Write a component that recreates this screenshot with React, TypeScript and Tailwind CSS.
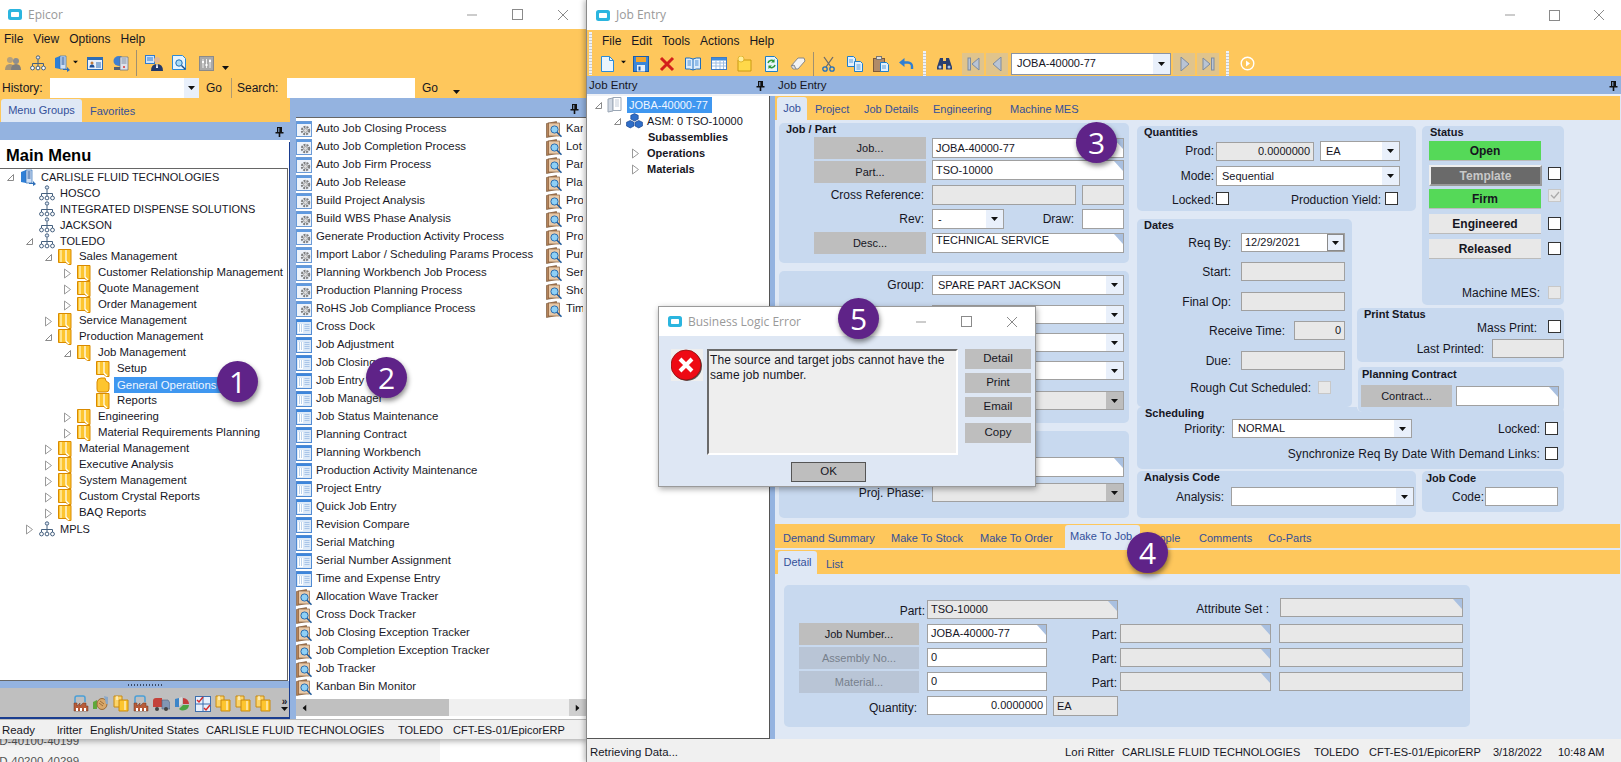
import React from "react";

const Caret = ({ className = "" }: { className?: string }) => (
  <svg width="7" height="4" viewBox="0 0 7 4" className={className}><path d="M0 0h7L3.5 4z" fill="#111" /></svg>
);
const Exp = ({ open }: { open?: boolean }) =>
  open ? (
    <svg width="9" height="9" viewBox="0 0 9 9"><path d="M7.5 1.5v6h-6z" fill="#fff" stroke="#8a8a8a" /></svg>
  ) : (
    <svg width="9" height="11" viewBox="0 0 9 11"><path d="M1.5 1l6 4.5-6 4.5z" fill="#fff" stroke="#9a9a9a" /></svg>
  );
const Folder = ({ rounded }: { rounded?: boolean }) => (
  <svg width="14" height="16" viewBox="0 0 14 16">
    {rounded ? (
      <path d="M1 5q0-4 4-4h4l1 3 3 2v6q0 3-3 3H3q-2 0-2-3z" fill="#fdc52f" stroke="#d98a00" />
    ) : (
      <path d="M.5.5h12.5v15h-3l-2-2H.5z" fill="#fdc52f" stroke="#d98a00" />
    )}
    {!rounded && <path d="M8 1v11l3 3" stroke="#fff" strokeWidth="1.2" fill="none" />}
    {!rounded && <path d="M3 1v12" stroke="#ffe38a" strokeWidth="2" />}
  </svg>
);
const Org = () => (
  <svg width="16" height="16" viewBox="0 0 16 16" fill="none" stroke="#45607f">
    <circle cx="8" cy="2.5" r="1.7" fill="#dfe8f5" />
    <path d="M8 4.5v4M2.5 11V8.5h11V11M8 8.5V11" />
    <circle cx="2.5" cy="13" r="1.9" fill="#fff" />
    <circle cx="8" cy="13" r="1.9" fill="#fff" />
    <circle cx="13.5" cy="13" r="1.9" fill="#fff" />
  </svg>
);
const Building = () => (
  <svg width="16" height="17" viewBox="0 0 16 17">
    <path d="M1 3l5-2v13l-5-1z" fill="#2e7fd6" />
    <path d="M6 1h6v13H6z" fill="#cfe0f5" stroke="#2e6fb8" strokeWidth=".7" />
    <path d="M7.5 3h3M7.5 5h3M7.5 7h3M7.5 9h3" stroke="#1c4f96" />
    <path d="M9 14h4v-2l3 3-3 2v-2H9z" fill="#2e6fb8" />
  </svg>
);
const Process = () => (
  <svg width="16" height="16" viewBox="0 0 16 16">
    <rect x=".5" y=".5" width="15" height="15" fill="#eef3fa" stroke="#6a9ad6" />
    <rect x="1" y="1" width="14" height="2" fill="#5f9ae0" />
    <circle cx="9.5" cy="9.5" r="3.7" fill="none" stroke="#7d7d7d" strokeWidth="2" strokeDasharray="2 1" />
    <circle cx="9.5" cy="9.5" r="2" fill="#dcdcdc" stroke="#777" strokeWidth=".6" />
  </svg>
);
const Entry = () => (
  <svg width="16" height="16" viewBox="0 0 16 16">
    <rect x=".5" y=".5" width="15" height="15" fill="#dce9f8" stroke="#4f8ad2" />
    <rect x="1" y="1" width="14" height="2" fill="#3d86dc" />
    <rect x="2" y="5" width="5" height="9" fill="#fff" />
    <path d="M3 6h1M5 6h1M3 8h1M5 8h1M3 10h1M5 10h1M3 12h1M5 12h1" stroke="#7aa6d8" />
    <path d="M8.5 5.5h5M8.5 7.5h5M8.5 9.5h5M8.5 11.5h5" stroke="#a9c5e8" />
  </svg>
);
const Tracker = () => (
  <svg width="17" height="17" viewBox="0 0 17 17">
    <path d="M.5 2.5l10-2v14l-10 2z" fill="#b5835a" stroke="#6c4a2c" strokeWidth=".6" />
    <rect x="2.5" y="2" width="11" height="13" fill="#e8c9a8" stroke="#8a5f3a" strokeWidth=".7" />
    <circle cx="8.5" cy="8.5" r="3.6" fill="#8fd0f5" stroke="#2b6fb0" />
    <path d="M11 11.2l4.5 4.5" stroke="#1e5a9a" strokeWidth="1.6" />
  </svg>
);
const Pin = () => (
  <svg width="9" height="11" viewBox="0 0 9 11"><path d="M2 1h5v5h1.500v1.500H5.300V11H3.700V7.500H.5V6H2zM3.300 2v4h1V2z" fill="#111" /></svg>
);
const Logo = () => (
  <svg width="14" height="11" viewBox="0 0 14 11"><rect x="0" y="0" width="14" height="11" rx="2.500" fill="#2bb5df" /><rect x="3" y="3" width="8" height="5" rx=".8" fill="#fff" /></svg>
);
const Ctl = ({ gap }: { gap: string }) => (
  <div className={"flex items-center text-[#7a7a7a] " + gap}>
    <svg width="12" height="12" viewBox="0 0 12 12"><path d="M1 6h10" stroke="#999" /></svg>
    <svg width="11" height="11" viewBox="0 0 11 11"><rect x=".5" y=".5" width="10" height="10" fill="none" stroke="#8a8a8a" /></svg>
    <svg width="12" height="12" viewBox="0 0 12 12"><path d="M1 1l10 10M11 1L1 11" stroke="#8a8a8a" /></svg>
  </div>
);
const Badge = ({ n, cls }: { n: number; cls: string }) => (
  <div className={"absolute z-30 w-[41px] h-[41px] rounded-full bg-[#5f2388] text-white flex items-center justify-center text-[30px] leading-none font-['Open_Sans',sans-serif] shadow-[1px_3px_5px_rgba(0,0,0,0.45)] " + cls}>{n}</div>
);

const Fold = () => (
  <svg width="9" height="10" viewBox="0 0 9 10" className="absolute right-0 top-0"><path d="M0 0h9v10z" fill="#a9c0e0" /></svg>
);

const Field = ({ cls, text, gray, fold, right, top }: { cls: string; text?: string; gray?: boolean; fold?: boolean; right?: boolean; top?: boolean }) => (
  <div className={"relative shrink-0 border border-[#a0a0a0] flex px-[3px] text-[11px] overflow-hidden " + (top ? "items-start leading-[13px] " : "items-center ") + (right ? "justify-end " : "") + (gray ? "bg-[#e8e8e8] " : "bg-white ") + cls}>
    <span className="whitespace-nowrap">{text}</span>
    {fold && <Fold />}
  </div>
);
const Combo = ({ cls, text, gray }: { cls: string; text?: string; gray?: boolean }) => (
  <div className={"shrink-0 border border-[#a0a0a0] flex items-center text-[11px] " + (gray ? "bg-[#e8e8e8] " : "bg-white ") + cls}>
    <span className="flex-1 px-[5px] whitespace-nowrap overflow-hidden">{text}</span>
    <div className={"w-[17px] h-full flex items-center justify-center " + (gray ? "bg-[#bdbdbd]" : "bg-[#e9f0fb]")}><Caret /></div>
  </div>
);
const Check = ({ cls = "", gray, checked }: { cls?: string; gray?: boolean; checked?: boolean }) => (
  <div className={"shrink-0 w-[13px] h-[13px] flex items-center justify-center border " + (gray ? "border-[#c8c8c8] bg-[#e8e8e8] " : "border-[#333] bg-white ") + cls}>
    {checked && <svg width="10" height="9" viewBox="0 0 10 9"><path d="M1 4l3 3 5-6" stroke="#aaa" strokeWidth="1.300" fill="none" /></svg>}
  </div>
);
const Label = ({ cls, children }: { cls: string; children: React.ReactNode }) => (
  <span className={"shrink-0 text-right text-[12px] whitespace-nowrap " + cls}>{children}</span>
);
const Btn = ({ cls, children, disabled }: { cls: string; children: React.ReactNode; disabled?: boolean }) => (
  <div className={"shrink-0 flex items-center justify-center text-[11px] " + (disabled ? "bg-[#b9c5d6] text-[#77808c] " : "bg-[#bebebe] ") + cls}>{children}</div>
);
const Title = ({ cls, children }: { cls: string; children: React.ReactNode }) => (
  <div className={"text-[11px] font-bold flex items-center whitespace-nowrap " + cls}>{children}</div>
);
const Panel = ({ cls, children }: { cls: string; children?: React.ReactNode }) => (
  <div className={"rounded-[5px] bg-[#c8d9ef] flex flex-col " + cls}>{children}</div>
);

type Node = { d: number; e?: "o" | "c"; i: "b" | "o" | "f" | "r"; t: string; sel?: boolean };
const tree: Node[] = [
  { d: 0, e: "o", i: "b", t: "CARLISLE FLUID TECHNOLOGIES" },
  { d: 1, i: "o", t: "HOSCO" },
  { d: 1, i: "o", t: "INTEGRATED DISPENSE SOLUTIONS" },
  { d: 1, i: "o", t: "JACKSON" },
  { d: 1, e: "o", i: "o", t: "TOLEDO" },
  { d: 2, e: "o", i: "f", t: "Sales Management" },
  { d: 3, e: "c", i: "f", t: "Customer Relationship Management" },
  { d: 3, e: "c", i: "f", t: "Quote Management" },
  { d: 3, e: "c", i: "f", t: "Order Management" },
  { d: 2, e: "c", i: "f", t: "Service Management" },
  { d: 2, e: "o", i: "f", t: "Production Management" },
  { d: 3, e: "o", i: "f", t: "Job Management" },
  { d: 4, i: "f", t: "Setup" },
  { d: 4, i: "r", t: "General Operations", sel: true },
  { d: 4, i: "f", t: "Reports" },
  { d: 3, e: "c", i: "f", t: "Engineering" },
  { d: 3, e: "c", i: "f", t: "Material Requirements Planning" },
  { d: 2, e: "c", i: "f", t: "Material Management" },
  { d: 2, e: "c", i: "f", t: "Executive Analysis" },
  { d: 2, e: "c", i: "f", t: "System Management" },
  { d: 2, e: "c", i: "f", t: "Custom Crystal Reports" },
  { d: 2, e: "c", i: "f", t: "BAQ Reports" },
  { d: 1, e: "c", i: "o", t: "MPLS" },
];
const depthPad = ["pl-[6px]", "pl-[25px]", "pl-[44px]", "pl-[63px]", "pl-[82px]"];

const processes = ["Auto Job Closing Process", "Auto Job Completion Process", "Auto Job Firm Process", "Auto Job Release", "Build Project Analysis", "Build WBS Phase Analysis", "Generate Production Activity Process", "Import Labor / Scheduling Params Process", "Planning Workbench Job Process", "Production Planning Process", "RoHS Job Compliance Process"];
const entries = ["Cross Dock", "Job Adjustment", "Job Closing", "Job Entry", "Job Manager", "Job Status Maintenance", "Planning Contract", "Planning Workbench", "Production Activity Maintenance", "Project Entry", "Quick Job Entry", "Revision Compare", "Serial Matching", "Serial Number Assignment", "Time and Expense Entry"];
const trackers = ["Allocation Wave Tracker", "Cross Dock Tracker", "Job Closing Exception Tracker", "Job Completion Exception Tracker", "Job Tracker", "Kanban Bin Monitor"];
const col2 = ["Kanban", "Lot", "Part", "Plant", "Project", "Production", "Production", "Purchase", "Serial", "Shop", "Time"];

const Item = ({ icon, text }: { icon: React.ReactNode; text: string }) => (
  <div className="flex items-center h-[18px] whitespace-nowrap">
    <div className="w-[20px] shrink-0">{icon}</div>
    <span className="text-[11.4px]">{text}</span>
  </div>
);

const Users = () => (
  <svg width="16" height="16" viewBox="0 0 16 16"><circle cx="5" cy="5" r="3" fill="#b5a17e" /><circle cx="11" cy="6" r="3" fill="#8e8e8e" /><path d="M0 15q0-6 5-6t4 6z" fill="#a69578" /><path d="M6 15q0-6 5-6t5 6z" fill="#7f7f7f" /></svg>
);
const Card = () => (
  <svg width="16" height="13" viewBox="0 0 16 13"><rect x=".5" y=".5" width="15" height="12" fill="#e8f0fb" stroke="#2d6db5" /><rect x="1" y="1" width="14" height="2" fill="#2d6db5" /><circle cx="5" cy="6" r="1.500" fill="#c07a3a" /><path d="M2.500 10.500q0-3 2.500-3t2.500 3z" fill="#1e4f96" /><path d="M9 6h5M9 8h5M9 10h5" stroke="#2d6db5" /></svg>
);
const Server = () => (
  <svg width="16" height="17" viewBox="0 0 16 17"><ellipse cx="6" cy="6" rx="5.500" ry="5" fill="#3f7fd0" /><path d="M7 2h8v13H7z" fill="#dde2ea" stroke="#5b6c80" strokeWidth=".7" /><path d="M8.500 4h5M8.500 6h5M8.500 8h5" stroke="#7e8ea3" /><circle cx="11" cy="12" r="1" fill="#d33" /><path d="M1 12h6v3H1z" fill="#555f6e" /></svg>
);
const Person = () => (
  <svg width="18" height="16" viewBox="0 0 18 16"><rect x=".5" y=".5" width="9" height="8" fill="#cfe4fa" stroke="#2f7bd0" /><path d="M2 3h6M2 5h6" stroke="#2f7bd0" /><circle cx="12" cy="5" r="3" fill="#e6b98f" /><path d="M6 16q0-7 6-7t6 7z" fill="#22396b" /><path d="M11.500 9h1l.5 4h-2z" fill="#fff" /></svg>
);
const DocMag = () => (
  <svg width="15" height="17" viewBox="0 0 15 17"><path d="M.5.5h10l3 3v11H.5z" fill="#e8f4fd" stroke="#2b8bd8" /><circle cx="7" cy="8" r="3.200" fill="#a9dcf8" stroke="#1f6fb8" /><path d="M9.500 10.500l4 4" stroke="#1f4f88" strokeWidth="1.500" /></svg>
);
const Sliders = () => (
  <svg width="15" height="15" viewBox="0 0 15 15"><rect x=".5" y=".5" width="14" height="14" fill="#a9a9a9" stroke="#8a8a8a" /><path d="M4 3v9M7.500 3v9M11 3v9" stroke="#eee" /><rect x="3" y="5" width="2" height="2" fill="#fff" /><rect x="6.500" y="8" width="2" height="2" fill="#fff" /><rect x="10" y="4" width="2" height="2" fill="#fff" /></svg>
);
const Factory = () => (
  <svg width="16" height="17" viewBox="0 0 16 17"><path d="M2 8V3q0-2 2-2h6q2 0 2 2v4" fill="none" stroke="#4aa0d8" strokeWidth="1.500" /><path d="M1 16V8h3v3l3-3v3l3-3 1 0 2 0v3h2v5z" fill="#b75c3a" stroke="#70371f" strokeWidth=".5" /><path d="M3 13h2v3H3zM7 13h2v3H7zM11 13h2v3h-2z" fill="#fff" /></svg>
);
const Shake = () => (
  <svg width="16" height="17" viewBox="0 0 16 17"><path d="M0 7l4-2v9H0z" fill="#5fa83c" /><ellipse cx="9" cy="9" rx="5" ry="5.500" fill="#d9a86a" stroke="#9b6d37" /><path d="M11 1l4 1v7h-2z" fill="#8aa8c8" /><path d="M6 8l4 3M7 6l4 3" stroke="#9b6d37" /></svg>
);
const Pages = () => (
  <svg width="16" height="17" viewBox="0 0 16 17"><path d="M1 1h8v11H1z" fill="#fbd46a" stroke="#c98a10" /><path d="M6 5h9v11H6z" fill="#fdc52f" stroke="#c98a10" /><path d="M4 1v4M12 6v9" stroke="#fff" /></svg>
);
const Truck = () => (
  <svg width="17" height="16" viewBox="0 0 17 16"><path d="M0 5q0-3 3-3h6v9H0z" fill="#c4423a" /><path d="M9 4h6l2 3v6H9z" fill="#8296b5" stroke="#50607a" strokeWidth=".6" /><circle cx="4" cy="13" r="2" fill="#444" /><circle cx="13" cy="13" r="2" fill="#444" /></svg>
);
const Pie = () => (
  <svg width="17" height="17" viewBox="0 0 17 17"><path d="M9 3a6 6 0 016 6H9z" fill="#c33b3b" /><path d="M9 10h6a6 6 0 01-10 4z" fill="#4aa343" /><path d="M1 4l4-1v9H1z" fill="#3d86c8" /><path d="M8 9V2L5 3v8z" fill="#d9d9d9" /></svg>
);
const Checks = () => (
  <svg width="16" height="16" viewBox="0 0 16 16"><rect x=".5" y=".5" width="15" height="15" fill="#e8f0fb" stroke="#3d6fae" /><path d="M8 0v16M0 8h16" stroke="#3d6fae" /><path d="M2 4l2 2 4-5M9 12l2 2 4-5" stroke="#d42c2c" strokeWidth="1.500" fill="none" /></svg>
);

const Grip = ({ cls }: { cls: string }) => (
  <div className={"w-[3px] h-[25px] shrink-0 bg-[repeating-linear-gradient(to_bottom,#eef2f8_0,#eef2f8_2px,#c9c9c9_2px,#c9c9c9_3px)] " + cls} />
);

const SaveIco = () => (
  <svg width="16" height="16" viewBox="0 0 16 16"><rect x=".5" y=".5" width="15" height="15" fill="#3b86d8" stroke="#1d5ca8" /><rect x="3" y="1" width="10" height="5" fill="#f4a52a" /><rect x="4" y="9" width="8" height="6.500" fill="#e6eef8" /><rect x="5.500" y="10.500" width="2" height="4" fill="#1d5ca8" /></svg>
);
const Book = () => (
  <svg width="16" height="14" viewBox="0 0 16 14"><path d="M8 2Q5 .5 .5 1v11q4.500-.5 7.500 1 3-1.500 7.500-1V1Q11 .5 8 2z" fill="#dcecfb" stroke="#1f6fc0" /><path d="M8 2v11" stroke="#1f6fc0" /><path d="M2.500 4h3.500M2.500 6h3.500M2.500 8h3.500M10 4h3.500M10 6h3.500M10 8h3.500" stroke="#4a90d8" /></svg>
);
const Table = () => (
  <svg width="16" height="13" viewBox="0 0 16 13"><rect x=".5" y=".5" width="15" height="12" fill="#fff" stroke="#3f7cc4" /><rect x="1" y="1" width="14" height="2.500" fill="#3f8bdc" /><path d="M1 6h14M1 9h14M5 3.500V12M9 3.500V12M12.500 3.500V12" stroke="#9dbde2" /></svg>
);
const Note = () => (
  <svg width="15" height="16" viewBox="0 0 15 16"><path d="M1 4h13v11H1z" fill="#ffd94a" stroke="#c99a12" /><circle cx="4" cy="3" r="3" fill="#ffef9a" stroke="#d7a516" strokeWidth=".7" /></svg>
);
const Refresh = () => (
  <svg width="13" height="16" viewBox="0 0 13 16"><path d="M.5.5h9l3 3v12H.5z" fill="#e8f5fb" stroke="#1f7fc4" /><path d="M3 7a3.500 3.500 0 016-1.500M10 9a3.500 3.500 0 01-6 1.500" stroke="#2a9a3a" strokeWidth="1.500" fill="none" /><path d="M9.500 3v3.500H6zM3.500 13V9.500H7z" fill="#2a9a3a" /></svg>
);
const Eraser = () => (
  <svg width="16" height="14" viewBox="0 0 16 14"><path d="M1 9l7-8h6l1 3-7 8H3z" fill="#f3f3f3" stroke="#888" /><path d="M1 9l3-1 2 4" fill="#d5d5d5" stroke="#888" /></svg>
);
const Scissors = () => (
  <svg width="13" height="16" viewBox="0 0 13 16" fill="none"><path d="M2 1l7 10M11 1L4 11" stroke="#6b6b6b" strokeWidth="1.300" /><circle cx="3" cy="13" r="2.200" stroke="#1f6fc0" strokeWidth="1.300" /><circle cx="10" cy="13" r="2.200" stroke="#1f6fc0" strokeWidth="1.300" /></svg>
);
const Copy = () => (
  <svg width="16" height="16" viewBox="0 0 16 16"><path d="M.5.5h6l2 2v8H.5z" fill="#e3f0fc" stroke="#1f7fcb" /><path d="M7.500 5.500h6l2 2v8h-8z" fill="#e3f0fc" stroke="#1f7fcb" /><path d="M9.500 9h4M9.500 11h4M9.500 13h4M2 4h4M2 6h4" stroke="#5aa0dc" /></svg>
);
const Paste = () => (
  <svg width="16" height="16" viewBox="0 0 16 16"><rect x=".5" y="2.500" width="11" height="13" fill="#b08a68" stroke="#7a5a3c" /><rect x="3.500" y=".5" width="5" height="3" fill="#ddd" stroke="#777" /><path d="M7.500 6.500h6l2 2v7h-8z" fill="#e3f0fc" stroke="#1f7fcb" /><path d="M9 10h4M9 12h4" stroke="#5aa0dc" /></svg>
);
const Undo = () => (
  <svg width="15" height="12" viewBox="0 0 15 12" fill="none"><path d="M4.500 4.500H9a4 4 0 014 4V11" stroke="#2f7fd2" strokeWidth="2.400" /><path d="M5.500 0v9L0 4.500z" fill="#2f7fd2" /></svg>
);
const Binoc = () => (
  <svg width="15" height="13" viewBox="0 0 15 13"><path d="M3 1h3v3h3V1h3l3 9v2.500H9V7H6v5.500H0V10z" fill="#2b3f6e" /><circle cx="3" cy="10" r="1.500" fill="#a9c4ea" /><circle cx="12" cy="10" r="1.500" fill="#a9c4ea" /></svg>
);
const Nav = ({ flip, bar }: { flip?: boolean; bar?: boolean }) => (
  <div className="w-[22px] h-[22px] shrink-0 bg-[#e0c48c] flex items-center justify-center">
    <svg width="13" height="14" viewBox="0 0 13 14" className={flip ? "" : "-scale-x-100"}>
      <path d={bar ? "M1 1l7 6-7 6z" : "M3 0l8 7-8 7z"} fill="#b9c4d4" stroke="#7d8ba0" />
      {bar && <rect x="9.500" y="1" width="2.500" height="12" fill="#b9c4d4" stroke="#7d8ba0" />}
    </svg>
  </div>
);

function LeftWindow() {
  return (
    <div className="absolute left-0 top-0 w-[587px] h-[739px] flex flex-col bg-[#f0f0f0] shadow-[0_2px_6px_rgba(0,0,0,0.35)] overflow-hidden">
      <div className="h-[29px] shrink-0 bg-white flex items-center pl-[8px] font-['Open_Sans',sans-serif] text-[12px] text-[#999]">
        <Logo /><span className="ml-[6px]">Epicor</span>
        <div className="ml-auto pr-[18px]"><Ctl gap="gap-[34px]" /></div>
      </div>
      <div className="h-[69px] shrink-0 bg-[#fec75c] flex flex-col text-[12px]">
        <div className="h-[20px] flex items-center pl-[4px] gap-[10px]"><span>File</span><span>View</span><span>Options</span><span>Help</span></div>
        <div className="h-[28px] flex items-center pl-[5px]">
          <Users />
          <div className="ml-[9px]"><Org /></div>
          <div className="ml-[8px]"><Building /></div>
          <Caret className="ml-[2px] mb-[3px] scale-75" />
          <div className="ml-[8px]"><Card /></div>
          <div className="ml-[10px]"><Server /></div>
          <div className="ml-[7px] w-px h-[26px] bg-[#a09070]" />
          <div className="ml-[8px]"><Person /></div>
          <div className="ml-[9px]"><DocMag /></div>
          <div className="ml-[12px]"><Sliders /></div>
          <Caret className="ml-[8px] mt-[10px]" />
        </div>
        <div className="h-[21px] flex items-center pl-[2px]">
          <span className="w-[48px]">History:</span>
          <div className="w-[149px] h-[20px] bg-white flex justify-end"><div className="w-[15px] h-full bg-[#e9f0fb] flex items-center justify-center"><Caret /></div></div>
          <span className="ml-[7px]">Go</span>
          <div className="ml-[9px] w-px h-[20px] bg-[#b09a70]" />
          <span className="ml-[5px] w-[50px]">Search:</span>
          <div className="w-[128px] h-[20px] bg-white" />
          <span className="ml-[7px]">Go</span>
          <Caret className="ml-[15px] mt-[8px]" />
        </div>
      </div>
      <div className="flex-1 flex min-h-0">
        <div className="w-[290px] shrink-0 flex flex-col bg-white">
          <div className="h-[24px] shrink-0 bg-[#fec75c] flex text-[11px] text-[#34509a]">
            <div className="ml-[1px] mt-[1px] w-[81px] bg-[#dfe8f5] rounded-t-[3px] flex items-center justify-center">Menu Groups</div>
            <span className="ml-[8px] mt-[5px]">Favorites</span>
          </div>
          <div className="h-[18px] shrink-0 bg-[#94b3e0] flex items-center justify-end pr-[6px]"><Pin /></div>
          <div className="mt-[2px] flex-1 min-h-0 flex flex-col border-r border-b-2 border-[#1a3d8f]">
            <div className="h-[26px] shrink-0 pl-[6px] flex items-center text-[16.500px] font-bold text-black">Main Menu</div>
            <div className="h-[513px] shrink-0 mr-[1px] border-y border-r border-[#666] overflow-hidden">
              {tree.map((n) => {
                const upper = n.t === n.t.toUpperCase();
                return (
                  <div key={n.t} className={"flex items-center h-[16px] whitespace-nowrap " + depthPad[n.d] + (upper ? " text-[11px]" : " text-[11.4px]")}>
                    <div className="w-[14px] shrink-0 flex">{n.e === "o" ? <Exp open /> : n.e === "c" ? <Exp /> : null}</div>
                    <div className="w-[19px] shrink-0 flex">{n.i === "b" ? <Building /> : n.i === "o" ? <Org /> : n.i === "r" ? <Folder rounded /> : <Folder />}</div>
                    <span className={n.sel ? "bg-[#3f97f0] text-[#f0f6ff] h-[16px] ml-[-1px] pl-[3px] pr-[10px] leading-[16px]" : "ml-[2px]"}>{n.t}</span>
                  </div>
                );
              })}
            </div>
            <div className="h-[7px] shrink-0 bg-[#94b3e0] flex justify-center items-center"><div className="w-[34px] h-[2px] bg-[repeating-linear-gradient(to_right,#3a4a66_0,#3a4a66_1px,transparent_1px,transparent_3px)]" /></div>
            <div className="flex-1 bg-[#bfbfbf] flex items-center pl-[73px] pt-[2px] gap-[4px]">
              <Factory /><Shake /><Pages /><Factory /><Truck /><Pie /><Checks /><Pages /><Pages /><Pages />
              <div className="ml-[6px] flex flex-col items-center leading-none text-[11px]"><span className="font-bold text-[10px]">»</span><Caret /></div>
            </div>
          </div>
        </div>
        <div className="flex-1 flex flex-col min-w-0 bg-[#94b3e0]">
          <div className="h-[19px] shrink-0 flex items-center justify-end pr-[8px] pt-[2px]"><Pin /></div>
          <div className="flex-1 min-h-0 ml-[6px] mr-[1px] flex flex-col border-t border-[#666] bg-white">
            <div className="flex-1 min-h-0 flex overflow-hidden pt-[2px] text-[#1a1a28]">
              <div className="w-[250px] shrink-0 flex flex-col">
                {processes.map((t) => <Item key={t} icon={<Process />} text={t} />)}
                {entries.map((t) => <Item key={t} icon={<Entry />} text={t} />)}
                {trackers.map((t) => <Item key={t} icon={<Tracker />} text={t} />)}
              </div>
              <div className="flex flex-col w-[37px] shrink-0 overflow-hidden">
                {col2.map((t, i) => <Item key={i} icon={<Tracker />} text={t} />)}
              </div>
            </div>
            <div className="h-[17px] shrink-0 mb-[3px] bg-[#f0f0f0] flex items-center">
              <div className="w-[17px] h-full bg-[#c0c0c0] flex items-center justify-center"><Caret className="rotate-90" /></div>
              <div className="w-[136px] h-full bg-[#c0c0c0]" />
              <div className="flex-1" />
              <div className="w-[17px] h-full bg-[#cfcfcf] flex items-center justify-center"><Caret className="-rotate-90" /></div>
            </div>
          </div>
        </div>
      </div>
      <div className="h-[20px] shrink-0 bg-[#f0f0f0] border-t border-[#bbb] flex items-center pt-[2px] text-[11.4px] relative whitespace-nowrap">
        <span className="ml-[2px] w-[55px]">Ready</span>
        <span className="w-[33px]">lritter</span>
        <span className="w-[116px]">English/United States</span>
        <span className="w-[192px] text-[11px]">CARLISLE FLUID TECHNOLOGIES</span>
        <span className="w-[55px] text-[11px]">TOLEDO</span>
        <span className="text-[11px]">CFT-ES-01/EpicorERP</span>
      </div>
    </div>
  );
}

function JobTree() {
  return (
    <div className="w-[183px] shrink-0 bg-white border-r border-b border-[#555] pt-[1px] text-[11px]">
      <div className="h-[16px] flex items-center pl-[7px]">
        <div className="w-[13px]"><Exp open /></div>
        <svg width="17" height="16" viewBox="0 0 17 16"><path d="M1 2l5-1v13l-5 1z" fill="#cfd7e2" stroke="#9aa6b5" /><path d="M6 .5h8v13H6z" fill="#fff" stroke="#9aa6b5" /><path d="M8 3h4M8 5h4M8 7h4M8 9h4" stroke="#c3ccd8" /></svg>
        <span className="ml-[3px] px-[2px] bg-[#3f97f0] text-[#f0f6ff] h-[16px] leading-[16px] w-[85px]">JOBA-40000-77</span>
      </div>
      <div className="h-[16px] flex items-center pl-[26px]">
        <div className="w-[13px]"><Exp open /></div>
        <svg width="17" height="16" viewBox="0 0 16 15"><path d="M8 .5l3.500 1.700v3.500L8 7.500 4.500 5.700V2.200zM4 7l3.500 1.700v3.500L4 14 .5 12.200V8.700zM12 7l3.500 1.700v3.500L12 14l-3.500-1.800V8.700z" fill="#2f6ec8" stroke="#14408a" strokeWidth=".6" /></svg>
        <span className="ml-[4px]">ASM: 0 TSO-10000</span>
      </div>
      <div className="h-[16px] flex items-center pl-[61px] font-bold">Subassemblies</div>
      <div className="h-[16px] flex items-center pl-[44px] font-bold"><div className="w-[16px]"><Exp /></div>Operations</div>
      <div className="h-[16px] flex items-center pl-[44px] font-bold"><div className="w-[16px]"><Exp /></div>Materials</div>
    </div>
  );
}

function UpperForm() {
  return (
    <div className="h-[404px] shrink-0 flex pl-[4px] pt-[3px] gap-[8px]">
      <div className="w-[350px] shrink-0 flex flex-col gap-[8px]">
        <Panel cls="h-[140px]">
          <Title cls="h-[12px] pl-[7px]">Job / Part</Title>
          <div className="flex mt-[2px] ml-[35px] gap-[6px]">
            <Btn cls="w-[112px] h-[22px]">Job...</Btn>
            <Field cls="w-[192px] h-[20px] mt-[1px]" text="JOBA-40000-77" fold />
          </div>
          <div className="flex mt-[2px] ml-[35px] gap-[6px]">
            <Btn cls="w-[112px] h-[22px]">Part...</Btn>
            <Field cls="w-[192px] h-[20px] -mt-[1px]" text="TSO-10000" fold />
          </div>
          <div className="flex items-center mt-[2px] gap-[8px]">
            <Label cls="w-[145px]">Cross Reference:</Label>
            <Field cls="w-[144px] h-[20px]" gray />
            <Field cls="w-[42px] h-[20px] -ml-[2px]" gray />
          </div>
          <div className="flex items-center mt-[4px]">
            <Label cls="w-[145px]">Rev:</Label>
            <Combo cls="w-[72px] h-[20px] ml-[8px]" text="-" />
            <Label cls="w-[70px]">Draw:</Label>
            <Field cls="w-[42px] h-[20px] ml-[8px]" />
          </div>
          <div className="flex mt-[3px] ml-[35px] gap-[6px]">
            <Btn cls="w-[112px] h-[22px]">Desc...</Btn>
            <Field cls="w-[192px] h-[20px] mt-[1px]" text="TECHNICAL SERVICE" fold top />
          </div>
        </Panel>
        <Panel cls="h-[152px] pt-[4px]">
          <div className="flex items-center gap-[8px]">
            <Label cls="w-[145px]">Group:</Label>
            <Combo cls="w-[192px] h-[20px]" text="SPARE PART JACKSON" />
          </div>
          <div className="flex justify-end pr-[5px] mt-[10px]"><Combo cls="w-[192px] h-[19px]" /></div>
          <div className="flex justify-end pr-[5px] mt-[9px]"><Combo cls="w-[192px] h-[19px]" /></div>
          <div className="flex justify-end pr-[5px] mt-[9px]"><Combo cls="w-[192px] h-[19px]" /></div>
          <div className="flex justify-end pr-[5px] mt-[11px]"><Combo cls="w-[192px] h-[19px]" gray /></div>
        </Panel>
        <Panel cls="h-[87px] pt-[26px]">
          <div className="flex justify-end pr-[5px]"><Field cls="w-[192px] h-[20px]" fold /></div>
          <div className="flex items-center gap-[8px] mt-[6px]">
            <Label cls="w-[145px]">Proj. Phase:</Label>
            <Combo cls="w-[192px] h-[19px]" gray />
          </div>
        </Panel>
      </div>

      <div className="mt-[3px] w-[427px] shrink-0 h-[392px] grid grid-cols-[215px_5px_59px_6px_142px] grid-rows-[85px_8px_86px_3px_54px_5px_40px_5px_57px_2px_41px_6px]">
        <Panel cls="col-start-1 col-end-4 row-start-1 row-end-2">
          <Title cls="h-[12px] pl-[7px]">Quantities</Title>
          <div className="flex items-center mt-[3px]">
            <Label cls="w-[77px]">Prod:</Label>
            <Field cls="w-[98px] h-[19px] ml-[2px]" text="0.0000000" gray right />
            <Combo cls="w-[80px] h-[20px] ml-[6px]" text="EA" />
          </div>
          <div className="flex items-center mt-[5px]">
            <Label cls="w-[77px]">Mode:</Label>
            <Combo cls="w-[184px] h-[20px] ml-[2px]" text="Sequential" />
          </div>
          <div className="flex items-center mt-[6px] h-[13px]">
            <Label cls="w-[77px] mt-[2px]">Locked:</Label>
            <Check cls="ml-[2px]" />
            <Label cls="w-[152px] mt-[2px]">Production Yield:</Label>
            <Check cls="ml-[4px]" />
          </div>
        </Panel>

        <Panel cls="col-start-5 col-end-6 row-start-1 row-end-4 pl-[7px] text-[12px] font-bold">
          <Title cls="h-[12px] pl-[1px] font-bold">Status</Title>
          <div className="mt-[3px] w-[112px] h-[20px] bg-[#55d958] border-b border-[#bbb] flex items-center justify-center">Open</div>
          <div className="flex items-start mt-[4px]">
            <div className="w-[113px] h-[21px] bg-[#6a6a6a] border-2 border-[#efefef] border-b-[#999] border-r-[#999] text-[#c8c8c8] flex items-center justify-center">Template</div>
            <Check cls="ml-[6px] mt-[2px]" />
          </div>
          <div className="flex items-start mt-[3px]">
            <div className="w-[112px] h-[20px] bg-[#55d958] border-b border-[#bbb] flex items-center justify-center">Firm</div>
            <Check cls="ml-[7px]" gray checked />
          </div>
          <div className="flex items-start mt-[5px]">
            <div className="w-[112px] h-[20px] bg-[#e8e8e8] border-b border-[#bbb] flex items-center justify-center">Engineered</div>
            <Check cls="ml-[7px] mt-[3px]" />
          </div>
          <div className="flex items-start mt-[5px]">
            <div className="w-[112px] h-[20px] bg-[#e8e8e8] border-b border-[#bbb] flex items-center justify-center">Released</div>
            <Check cls="ml-[7px] mt-[3px]" />
          </div>
          <div className="flex items-center mt-[27px] h-[13px] font-normal">
            <Label cls="w-[111px] mt-[1px]">Machine MES:</Label>
            <Check cls="ml-[8px]" gray />
          </div>
        </Panel>

        <Panel cls="col-start-1 col-end-2 row-start-3 row-end-8">
          <Title cls="h-[12px] pl-[7px]">Dates</Title>
          <div className="flex items-center mt-[2px]">
            <Label cls="w-[94px]">Req By:</Label>
            <div className="ml-[10px] w-[104px] h-[19px] bg-white border border-[#a0a0a0] flex items-center text-[11px]">
              <span className="flex-1 pl-[3px]">12/29/2021</span>
              <div className="w-[17px] h-full bg-[#e9f0fb] border border-[#8a8a8a] flex items-center justify-center"><Caret /></div>
            </div>
          </div>
          <div className="flex items-center mt-[10px]"><Label cls="w-[94px]">Start:</Label><Field cls="ml-[10px] w-[104px] h-[19px]" gray /></div>
          <div className="flex items-center mt-[11px]"><Label cls="w-[94px]">Final Op:</Label><Field cls="ml-[10px] w-[104px] h-[19px]" gray /></div>
          <div className="flex items-center mt-[10px]"><Label cls="w-[148px]">Receive Time:</Label><Field cls="ml-[9px] w-[51px] h-[19px]" text="0" gray right /></div>
          <div className="flex items-center mt-[11px]"><Label cls="w-[94px]">Due:</Label><Field cls="ml-[10px] w-[104px] h-[19px]" gray /></div>
          <div className="flex items-center mt-[11px] h-[13px]"><Label cls="w-[174px]">Rough Cut Scheduled:</Label><Check cls="ml-[7px]" gray /></div>
        </Panel>

        <Panel cls="col-start-3 col-end-6 row-start-5 row-end-6">
          <Title cls="h-[12px] pl-[7px]">Print Status</Title>
          <div className="flex items-center h-[13px]"><Label cls="w-[180px] mt-[2px]">Mass Print:</Label><Check cls="ml-[11px]" /></div>
          <div className="flex items-center mt-[6px]"><Label cls="w-[127px]">Last Printed:</Label><Field cls="ml-[8px] w-[72px] h-[19px]" gray /></div>
        </Panel>

        <Panel cls="col-start-3 col-end-6 row-start-7 row-end-9 z-10 border-l border-[#dfe8f5]">
          <Title cls="h-[14px] pl-[4px]">Planning Contract</Title>
          <div className="flex mt-[4px] ml-[3px]">
            <Btn cls="w-[91px] h-[22px]">Contract...</Btn>
            <Field cls="ml-[4px] w-[103px] h-[20px] mt-[1px]" fold />
          </div>
        </Panel>

        <Panel cls="col-start-1 col-end-6 row-start-8 row-end-10">
          <Title cls="h-[12px] pl-[8px]">Scheduling</Title>
          <div className="flex items-center">
            <Label cls="w-[88px]">Priority:</Label>
            <Combo cls="ml-[7px] w-[180px] h-[19px]" text="NORMAL" />
            <Label cls="w-[128px]">Locked:</Label>
            <Check cls="ml-[5px]" />
          </div>
          <div className="flex items-center mt-[9px] h-[13px]">
            <Label cls="w-[403px] tracking-[0.1px]">Synchronize Req By Date With Demand Links:</Label>
            <Check cls="ml-[5px]" />
          </div>
        </Panel>

        <Panel cls="col-start-1 col-end-4 row-start-11 row-end-13">
          <Title cls="h-[12px] pl-[7px]">Analysis Code</Title>
          <div className="flex items-center mt-[4px]">
            <Label cls="w-[87px]">Analysis:</Label>
            <Combo cls="ml-[7px] w-[183px] h-[19px]" />
          </div>
        </Panel>

        <Panel cls="col-start-5 col-end-6 row-start-11 row-end-12">
          <Title cls="h-[14px] pl-[4px]">Job Code</Title>
          <div className="flex items-center mt-[2px]">
            <Label cls="w-[62px]">Code:</Label>
            <Field cls="ml-[1px] w-[73px] h-[19px]" />
          </div>
        </Panel>
      </div>
    </div>
  );
}

function LowerForm() {
  return (
    <div className="flex-1 min-h-0 flex flex-col">
      <div className="h-[24px] shrink-0 bg-[#fec75c] flex text-[11px] text-[#34509a] mr-[1px] whitespace-nowrap">
        <span className="ml-[8px] mt-[6px] w-[108px]">Demand Summary</span>
        <span className="mt-[6px] w-[89px]">Make To Stock</span>
        <span className="mt-[6px] w-[85px]">Make To Order</span>
        <div className="mt-[1px] w-[75px] bg-[#dfe8f5] rounded-t-[3px] pl-[5px] pt-[3px]">Make To Job</div>
        <span className="ml-[6px] mt-[6px] w-[53px]">People</span>
        <span className="mt-[6px] w-[69px]">Comments</span>
        <span className="mt-[6px]">Co-Parts</span>
      </div>
      <div className="h-[24px] shrink-0 mt-[2px] bg-[#fec75c] flex text-[11px] text-[#34509a] mr-[1px]">
        <div className="ml-[3px] mt-[1px] w-[39px] bg-[#dfe8f5] rounded-t-[3px] flex justify-center pt-[3px]">Detail</div>
        <span className="ml-[9px] mt-[6px]">List</span>
      </div>
      <Panel cls="mt-[11px] ml-[9px] w-[686px] h-[142px] pt-[13px]">
        <div className="flex items-start h-[21px]">
          <Label cls="w-[141px] mt-[4px]">Part:</Label>
          <Field cls="ml-[2px] w-[191px] h-[19px] mt-[2px]" text="TSO-10000" gray fold />
          <Label cls="w-[151px] mt-[2px]">Attribute Set :</Label>
          <Field cls="ml-[11px] w-[183px] h-[19px]" gray fold />
        </div>
        {[
          { b: "Job Number...", v: "JOBA-40000-77", dis: false, f: true },
          { b: "Assembly No...", v: "0", dis: true, f: false },
          { b: "Material...", v: "0", dis: true, f: false },
        ].map((r, i) => (
          <div key={r.b} className={"flex items-start " + (i === 0 ? "mt-[4px]" : "mt-[2px]")}>
            <Btn cls="ml-[15px] w-[120px] h-[22px]" disabled={r.dis}>{r.b}</Btn>
            <Field cls="ml-[8px] w-[120px] h-[19px] mt-[1px]" text={r.v} fold={r.f} />
            <Label cls="w-[70px] mt-[3px]">Part:</Label>
            <Field cls="ml-[3px] w-[151px] h-[19px] mt-[1px]" gray fold />
            <Field cls="ml-[8px] w-[184px] h-[19px] mt-[1px]" gray />
          </div>
        ))}
        <div className="flex items-start mt-[3px]">
          <Label cls="w-[133px] mt-[3px]">Quantity:</Label>
          <Field cls="ml-[10px] w-[120px] h-[19px]" text="0.0000000" right />
          <Field cls="ml-[6px] w-[65px] h-[20px]" text="EA" gray />
        </div>
      </Panel>
    </div>
  );
}

function JobWindow() {
  return (
    <div className="absolute left-[586px] top-0 w-[1035px] h-[762px] flex flex-col bg-[#f0f0f0] border-l border-[#8a8a8a] shadow-[-2px_0_5px_rgba(0,0,0,0.25)] overflow-hidden">
      <div className="h-[30px] shrink-0 bg-white flex items-center pl-[9px] font-['Open_Sans',sans-serif] text-[12px] text-[#999]">
        <Logo /><span className="ml-[6px]">Job Entry</span>
        <div className="ml-auto pr-[16px]"><Ctl gap="gap-[33px]" /></div>
      </div>
      <div className="h-[46px] shrink-0 bg-[#fec75c] flex">
        <Grip cls="ml-[2px] mt-[2px] !h-[43px]" />
        <div className="flex-1 flex flex-col">
          <div className="h-[21px] flex items-center pl-[10px] gap-[10px] text-[12px]">
            <span>File</span><span>Edit</span><span>Tools</span><span>Actions</span><span>Help</span>
          </div>
          <div className="h-[25px] flex items-center pl-[9px]">
            <svg width="13" height="16" viewBox="0 0 13 16"><path d="M.5.5h8l4 4v11H.5z" fill="#eaf4fc" stroke="#2b8bd8" /><path d="M8.500.5v4h4" fill="none" stroke="#2b8bd8" /></svg>
            <Caret className="ml-[6px] mb-[3px] scale-75" />
            <div className="ml-[6px]"><SaveIco /></div>
            <svg width="16" height="16" viewBox="0 0 16 16" className="ml-[10px]"><path d="M2 2l12 12M14 2L2 14" stroke="#d3201c" strokeWidth="3" /></svg>
            <div className="ml-[10px]"><Book /></div>
            <div className="ml-[10px]"><Table /></div>
            <div className="ml-[10px]"><Note /></div>
            <div className="ml-[13px]"><Refresh /></div>
            <div className="ml-[12px]"><Eraser /></div>
            <div className="ml-[7px] w-px h-[24px] bg-[#a09070]" />
            <div className="ml-[8px]"><Scissors /></div>
            <div className="ml-[12px]"><Copy /></div>
            <div className="ml-[10px]"><Paste /></div>
            <div className="ml-[10px]"><Undo /></div>
            <Grip cls="ml-[9px]" />
            <div className="ml-[11px]"><Binoc /></div>
            <div className="ml-[10px]"><Nav bar /></div>
            <div className="ml-[2px]"><Nav /></div>
            <div className="ml-[3px] w-[160px] h-[22px] bg-white border border-[#8a94a6] flex items-center text-[11px]">
              <span className="flex-1 pl-[5px]">JOBA-40000-77</span>
              <div className="w-[17px] h-full bg-[#e9f0fb] flex items-center justify-center"><Caret /></div>
            </div>
            <div className="ml-[2px]"><Nav flip /></div>
            <div className="ml-[2px]"><Nav flip bar /></div>
            <Grip cls="ml-[7px]" />
            <svg width="15" height="15" viewBox="0 0 15 15" className="ml-[11px]" fill="none"><circle cx="7.500" cy="7.500" r="6.300" stroke="#fff" strokeWidth="1.400" /><path d="M6 4.500l4 3-4 3z" fill="#fff" /></svg>
          </div>
        </div>
      </div>
      <div className="h-[18px] shrink-0 bg-[#94b3e0] flex items-center pt-[1px] text-[11.5px]">
        <span className="ml-[2px] w-[167px]">Job Entry</span>
        <Pin />
        <span className="ml-[13px]">Job Entry</span>
        <div className="ml-auto mr-[3px]"><Pin /></div>
      </div>
      <div className="h-[2px] shrink-0 bg-[#eef1f6]" />
      <div className="h-[643px] shrink-0 flex">
        <JobTree />
        <div className="w-[5px] shrink-0 bg-[#94b3e0]" />
        <div className="flex-1 min-w-0 bg-[#dfe8f5] flex flex-col">
          <div className="h-[24px] shrink-0 bg-[#fec75c] flex text-[11px] text-[#34509a] whitespace-nowrap mr-[1px]">
            <div className="ml-[2px] mt-[1px] w-[30px] bg-[#dfe8f5] rounded-t-[3px] flex justify-center pt-[3px]">Job</div>
            <span className="ml-[8px] mt-[5px] w-[49px]">Project</span>
            <span className="mt-[5px] w-[69px]">Job Details</span>
            <span className="mt-[5px] w-[77px]">Engineering</span>
            <span className="mt-[5px]">Machine MES</span>
          </div>
          <UpperForm />
          <LowerForm />
        </div>
      </div>
      <div className="flex-1 flex items-center pt-[4px] text-[11.4px] whitespace-nowrap">
        <span className="ml-[3px] w-[475px]">Retrieving Data...</span>
        <span className="w-[57px]">Lori Ritter</span>
        <span className="w-[192px] text-[11px]">CARLISLE FLUID TECHNOLOGIES</span>
        <span className="w-[55px] text-[11px]">TOLEDO</span>
        <span className="w-[124px] text-[11px]">CFT-ES-01/EpicorERP</span>
        <span className="w-[65px] text-[11px]">3/18/2022</span>
        <span className="text-[11px]">10:48 AM</span>
      </div>
    </div>
  );
}

function ErrorDialog() {
  return (
    <div className="absolute z-20 left-[658px] top-[306px] w-[378px] h-[181px] flex flex-col bg-[#dee7f4] border border-[#9a9a9a] shadow-[1px_2px_6px_rgba(0,0,0,0.35)]">
      <div className="h-[29px] shrink-0 bg-white flex items-center pl-[9px] font-['Open_Sans',sans-serif] text-[12px] text-[#999]">
        <Logo /><span className="ml-[6px]">Business Logic Error</span>
        <div className="ml-auto pr-[17px]"><Ctl gap="gap-[34px]" /></div>
      </div>
      <div className="flex mt-[13px]">
        <div className="ml-[12px] w-[32px] h-[32px] bg-[#eeeeee] flex items-center justify-center">
          <svg width="32" height="32" viewBox="0 0 32 32">
            <circle cx="16" cy="17" r="15" fill="#555" />
            <circle cx="15" cy="16" r="15" fill="#ee0a14" stroke="#8c1010" strokeWidth=".8" />
            <path d="M9 10l12 12M21 10L9 22" stroke="#fff" strokeWidth="4" />
          </svg>
        </div>
        <div className="ml-[4px] w-[251px] h-[106px] bg-[#eeeeee] border-2 border-[#6a6a6a] border-r-white border-b-white px-[1px] pt-[2px] text-[12px] leading-[15px] tracking-[0.07px]">
          The source and target jobs cannot have the same job number.
        </div>
        <div className="ml-[7px] w-[66px] flex flex-col gap-[4px] text-[11.500px]">
          <div className="h-[20px] bg-[#bebebe] flex items-center justify-center">Detail</div>
          <div className="h-[20px] bg-[#bebebe] flex items-center justify-center">Print</div>
          <div className="h-[20px] bg-[#bebebe] flex items-center justify-center">Email</div>
          <div className="h-[20px] mt-[2px] bg-[#bebebe] flex items-center justify-center">Copy</div>
        </div>
      </div>
      <div className="ml-[132px] mt-[7px] w-[75px] h-[20px] bg-[#bebebe] border border-[#555] flex items-center justify-center text-[11.500px]">OK</div>
    </div>
  );
}

export default function App() {
  return (
    <div className="relative w-[1621px] h-[762px] overflow-hidden bg-white font-['Liberation_Sans',Arial,sans-serif] text-[#16161f]">
      <div className="absolute left-0 top-[731px] w-[440px] h-[31px] bg-[#f4f4f4] text-[11.5px] leading-[20px] text-[#555] overflow-hidden">
        <div className="-ml-[4px]">ID-40100-40199</div>
        <div className="-ml-[4px]">ID-40200-40299</div>
      </div>
      <LeftWindow />
      <JobWindow />
      <ErrorDialog />
      <Badge n={1} cls="left-[217px] top-[361px]" />
      <Badge n={2} cls="left-[366px] top-[357px]" />
      <Badge n={3} cls="left-[1076px] top-[122px]" />
      <Badge n={4} cls="left-[1127px] top-[532px]" />
      <Badge n={5} cls="left-[838px] top-[298px]" />
    </div>
  );
}
